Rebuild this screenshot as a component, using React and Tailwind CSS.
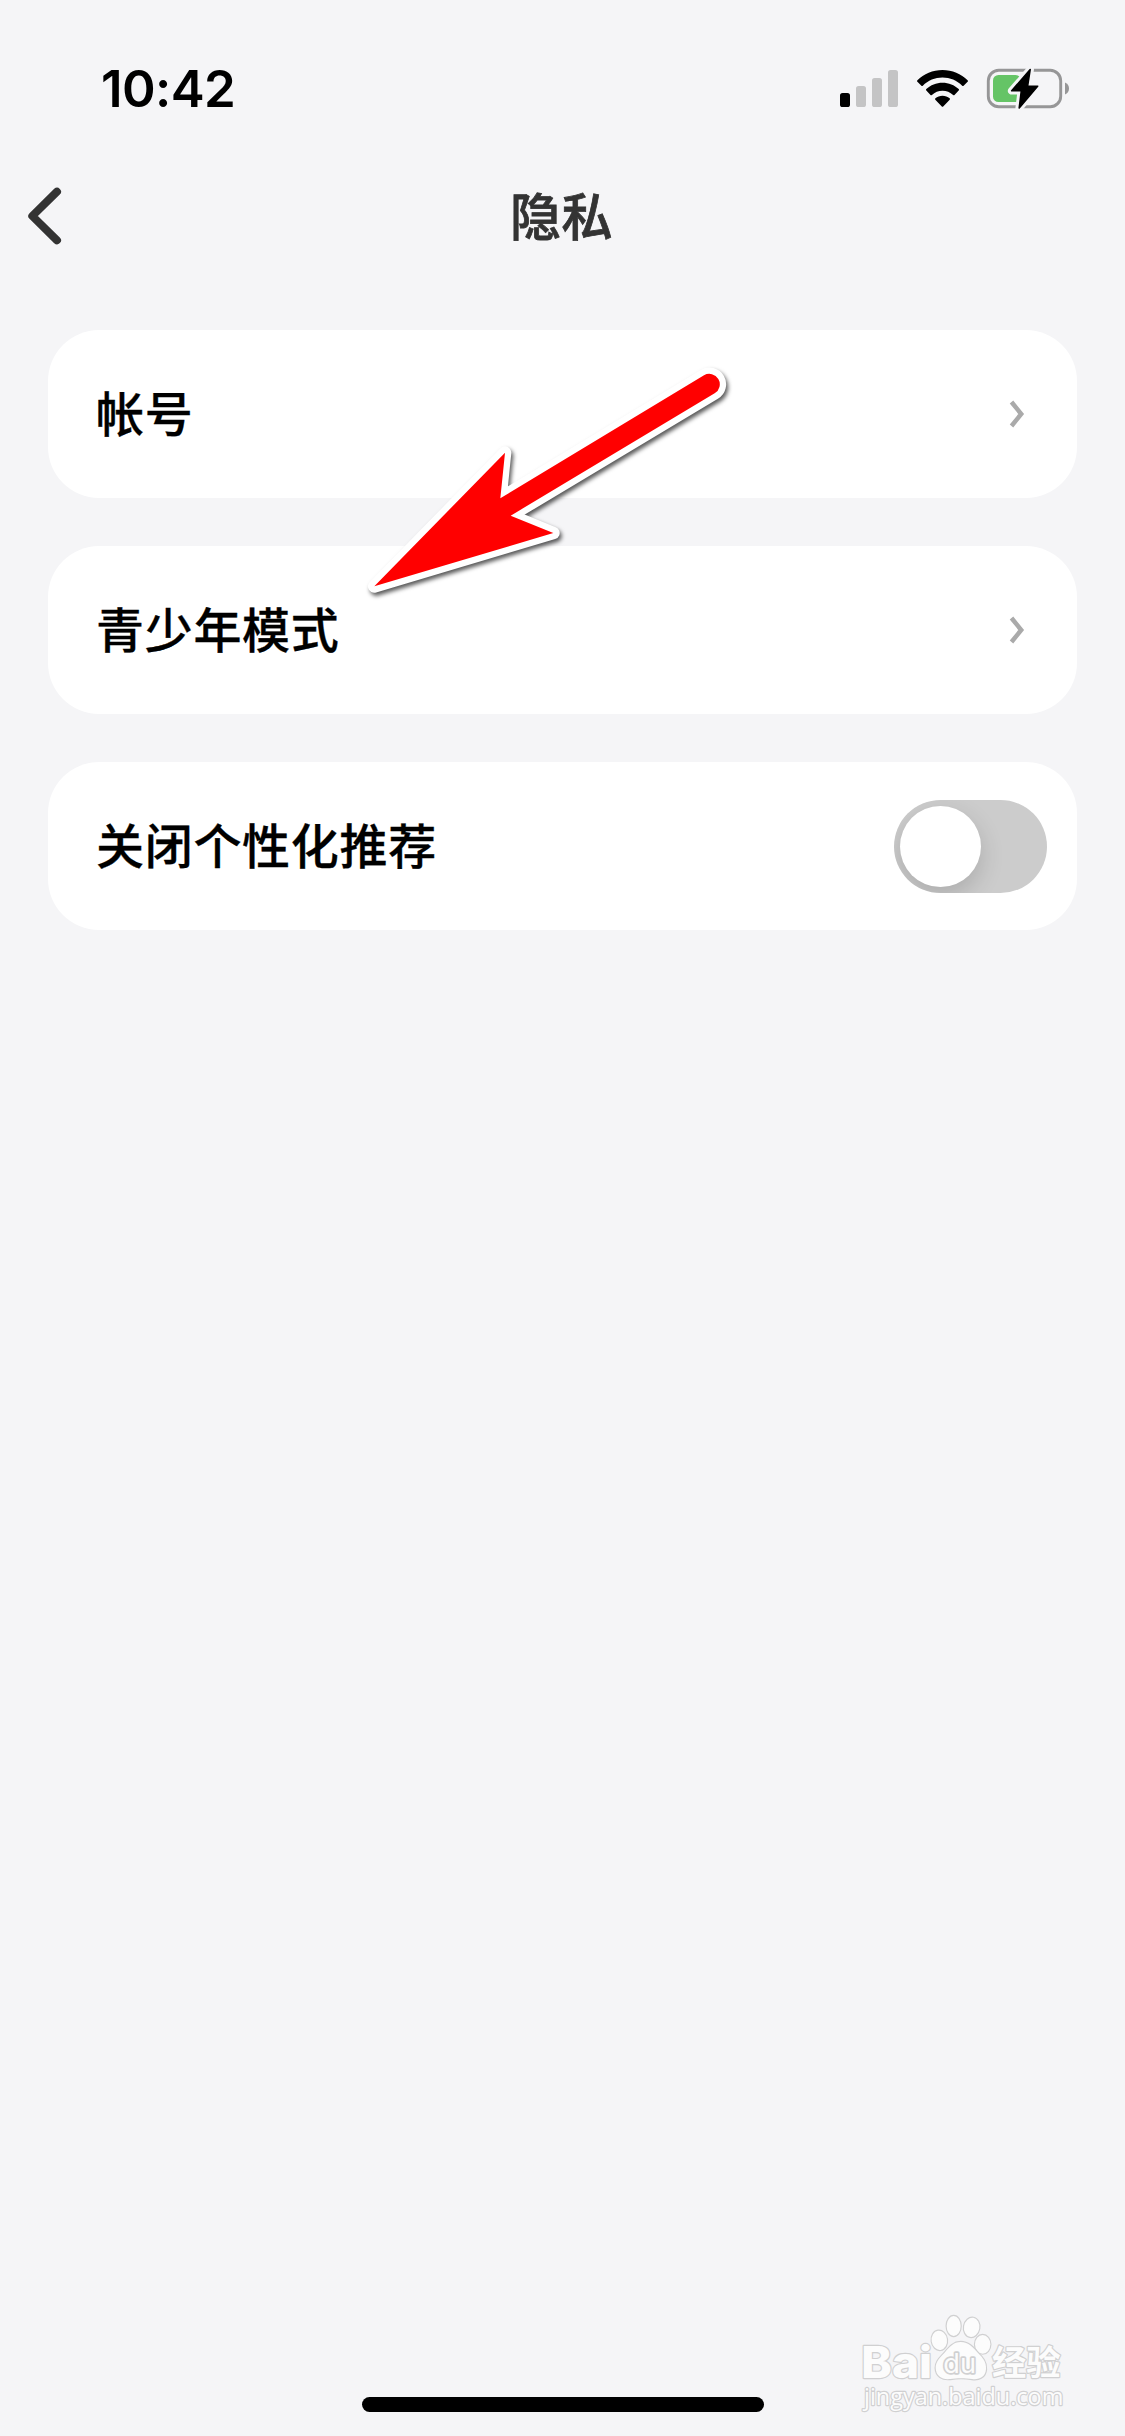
import React, { useState } from 'react';

const SignalIcon = () => (
  <svg className="w-[58px] h-[37px]" viewBox="0 0 58 37">
    <rect x="0" y="23" width="10" height="14" rx="2.6" fill="#000" />
    <rect x="16" y="16" width="10" height="21" rx="2.6" fill="#c4c4c5" />
    <rect x="32" y="8" width="10" height="29" rx="2.6" fill="#c4c4c5" />
    <rect x="48" y="0" width="10" height="37" rx="2.6" fill="#c4c4c5" />
  </svg>
);

const WifiIcon = () => (
  <svg className="w-[51px] h-[37px]" viewBox="0 0 51 37" fill="#000">
    <path d="M25.5 0C35.2 0 44.2 3.8 50.6 10.2c.5.5.5 1 0 1.5l-4 4c-.4.4-1 .4-1.4 0C39.9 10.5 33 7.6 25.5 7.6S11.1 10.5 5.8 15.7c-.4.4-1 .4-1.4 0l-4-4c-.5-.5-.5-1 0-1.5C6.8 3.8 15.8 0 25.5 0Z" />
    <path d="M25.5 12.7c6.2 0 12 2.4 16.2 6.4.5.5.5 1 0 1.5l-4.2 4.3c-.4.4-.9.4-1.4 0-2.9-2.7-6.6-4.2-10.6-4.2s-7.7 1.5-10.6 4.2c-.5.4-1 .4-1.4 0L9.3 20.6c-.5-.5-.5-1 0-1.5 4.2-4 10-6.4 16.2-6.4Z" />
    <path d="M25.5 25.7c2.7 0 5.2 1 7.1 2.6.5.4.5 1 .1 1.5l-6.5 6.7c-.4.4-1 .4-1.4 0l-6.5-6.7c-.4-.5-.4-1.1.1-1.5 1.9-1.6 4.4-2.6 7.1-2.6Z" />
  </svg>
);

const BatteryIcon = () => (
  <svg className="w-[84px] h-[43px]" viewBox="986 67 84 43">
    <rect x="988.3" y="70.3" width="72.4" height="36.4" rx="10.5" fill="none" stroke="#969697" strokeWidth="2.9" />
    <path d="M1065 82.5c2.5 1 4 3.2 4 6s-1.5 5-4 6Z" fill="#969697" />
    <rect x="993" y="75" width="28" height="27" rx="5.5" fill="#65c466" />
    <path
      d="M1030.2 69.5 1011.7 90.8H1021.3L1019.2 108 1037.6 86.2H1027.6Z"
      fill="#f5f5f7"
      stroke="#f5f5f7"
      strokeWidth="7.5"
      strokeLinejoin="round"
    />
    <path
      d="M1030.2 69.5 1011.7 90.8H1021.3L1019.2 108 1037.6 86.2H1027.6Z"
      fill="#000"
      stroke="#000"
      strokeWidth="1.6"
      strokeLinejoin="round"
    />
  </svg>
);

const StatusBar = () => (
  <div className="h-[132px] pt-[45px] pl-[101px] pr-[55px] flex items-start justify-between">
    <span className="mt-[6px] font-['Inter',sans-serif] font-semibold text-[51px] leading-[76px] tracking-[-0.6px] text-black">10:42</span>
    <div className="flex items-center h-[87px]">
      <SignalIcon />
      <span className="ml-[19px] flex">
        <WifiIcon />
      </span>
      <span className="ml-[18px] flex">
        <BatteryIcon />
      </span>
    </div>
  </div>
);

const Header = ({ title }) => (
  <header className="h-[168px] grid grid-cols-[120px_1fr_120px] items-center text-[#333]">
    <button type="button" className="pl-[27px]">
      <svg className="w-[35px] h-[58px]" viewBox="0 0 35 58" fill="none" stroke="currentColor" strokeWidth="8" strokeLinecap="round" strokeLinejoin="round">
        <path d="M30 4.7 5.3 29 30 53.3" />
      </svg>
    </button>
    <h1 className="pb-[5px] pr-[2px] text-center text-[51px] font-medium leading-[72px] tracking-[0.4px] [-webkit-text-stroke:0.8px_#333]">{title}</h1>
  </header>
);

const Chevron = () => (
  <svg className="w-[16px] h-[30px] mr-[52px]" viewBox="0 0 16 30" fill="none" stroke="#aaa" strokeWidth="4.5">
    <path d="M2.5 3 12.2 15 2.5 27" />
  </svg>
);

const Toggle = ({ checked, onChange }) => (
  <button
    type="button"
    role="switch"
    aria-checked={checked}
    onClick={() => onChange(!checked)}
    className={`w-[153px] h-[93px] p-[6px] mr-[30px] rounded-full overflow-hidden flex ${
      checked ? 'bg-[#65c466] justify-end' : 'bg-[#ccc] justify-start'
    }`}
  >
    <span className="w-[81px] h-[81px] rounded-full bg-white shadow-[0_9px_24px_rgba(0,0,0,0.16)]" />
  </button>
);

const Row = ({ label, children }) => (
  <div className="h-[168px] pl-[48px] flex items-center justify-between bg-white rounded-[51px]">
    <span className="pb-[7px] text-[48px] leading-[68px] tracking-[0.7px] font-medium text-black [-webkit-text-stroke:0.3px_#000]">{label}</span>
    {children}
  </div>
);

const ARROW_PATH = 'M103 709 495 308 481 445 1092 76A31 31 0 0 1 1124 130L512 497 640 549Z';

const Arrow = () => (
  <svg className="absolute left-[340px] top-[350px] w-[400px] h-[260px] drop-shadow-[2px_3px_2px_rgba(0,0,0,0.65)]" viewBox="0 0 1200 780">
    <path d={ARROW_PATH} fill="#fff" stroke="#fff" strokeWidth="38" strokeLinejoin="round" />
    <path d={ARROW_PATH} fill="#f00" />
  </svg>
);

const Watermark = () => (
  <svg
    className="absolute right-[25px] bottom-0 w-[260px] h-[146px] [paint-order:stroke]"
    viewBox="0 0 780 438"
    fill="#fcfcfc"
    stroke="#d0d0d1"
    strokeWidth="7"
    strokeLinejoin="round"
  >
    <text x="64" y="264" fontSize="133" fontWeight="800" textLength="212" lengthAdjust="spacingAndGlyphs" className="font-['Inter',sans-serif]">Bai</text>
    <ellipse cx="298" cy="151" rx="23" ry="29" transform="rotate(-8 298 151)" />
    <ellipse cx="341" cy="108" rx="21" ry="30" />
    <ellipse cx="395" cy="112" rx="23" ry="29" transform="rotate(10 395 112)" />
    <ellipse cx="428" cy="163" rx="23" ry="28" />
    <path d="M362 156C386 156 400 173 414 189C427 202 440 216 438 238C436 262 417 270 396 267C376 264 350 264 331 267C307 270 288 259 287 234C287 213 302 202 315 187C328 171 341 156 362 156Z" />
    <text x="310" y="248" fontSize="80" textLength="98" lengthAdjust="spacingAndGlyphs" strokeWidth="10" className="font-['Inter',sans-serif]">du</text>
    <text x="456" y="256" fontSize="103" fontWeight="700" textLength="206" lengthAdjust="spacingAndGlyphs" className="font-['Noto_Sans_CJK_SC',sans-serif]">经验</text>
    <text x="72" y="345" fontSize="70" fontWeight="500" textLength="598" lengthAdjust="spacingAndGlyphs" className="font-['Open_Sans',sans-serif]">jingyan.baidu.com</text>
  </svg>
);

const App = () => {
  const [personalizedOff, setPersonalizedOff] = useState(false);

  return (
    <div className="relative w-[1125px] h-[2436px] flex flex-col overflow-hidden bg-[#f5f5f7] font-['Noto_Sans_CJK_SC',sans-serif]">
      <StatusBar />
      <Header title="隐私" />

      <main className="flex-1 px-[48px] pt-[30px] flex flex-col gap-12">
        <Row label="帐号">
          <Chevron />
        </Row>
        <Row label="青少年模式">
          <Chevron />
        </Row>
        <Row label="关闭个性化推荐">
          <Toggle checked={personalizedOff} onChange={setPersonalizedOff} />
        </Row>
      </main>

      {/* Home indicator */}
      <div className="w-[402px] h-[15px] mb-6 ml-[362px] rounded-full bg-black" />

      <Arrow />
      <Watermark />
    </div>
  );
};

export default App;
